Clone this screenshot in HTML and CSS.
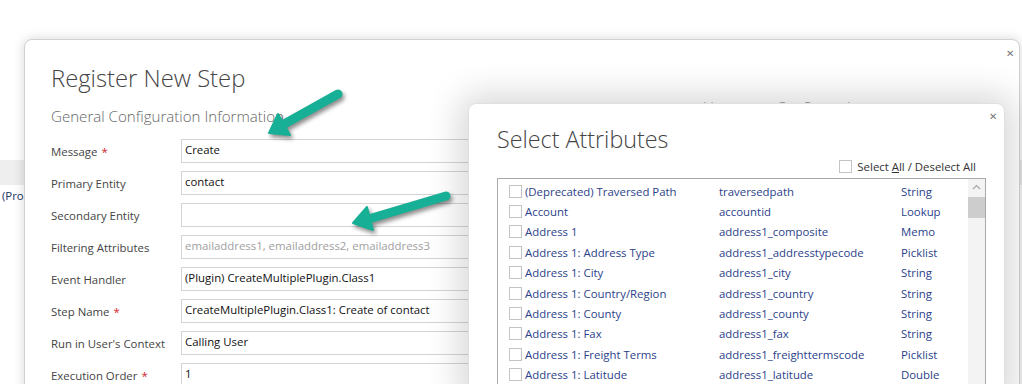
FILE: index.html
```html
<!DOCTYPE html>
<html lang="en">
<head>
	<meta charset="UTF-8">
	<title>Register New Step</title>
	<link rel="stylesheet" href="styles.css">
</head>
<body>
	<!-- page behind the dialogs -->
	<div class="page">
		<div class="band"></div>
		<div class="pagerow">(Pro</div>
	</div>

	<!-- register new step -->
	<div class="dialog main">
		<span class="close">&#x2715;</span>
		<h1>Register New Step</h1>
		<div class="cols">
			<div class="left">
				<h2>General Configuration Information</h2>
				<div class="form">
					<label>Message <span class="req">*</span></label>
					<div class="input">Create</div>
					<label>Primary Entity</label>
					<div class="input">contact</div>
					<label>Secondary Entity</label>
					<div class="input"></div>
					<label>Filtering Attributes</label>
					<div class="input hint">emailaddress1, emailaddress2, emailaddress3</div>
					<label>Event Handler</label>
					<div class="input">(Plugin) CreateMultiplePlugin.Class1</div>
					<label>Step Name <span class="req">*</span></label>
					<div class="input">CreateMultiplePlugin.Class1: Create of contact</div>
					<label>Run in User's Context</label>
					<div class="input">Calling User</div>
					<label>Execution Order <span class="req">*</span></label>
					<div class="input">1</div>
				</div>
			</div>
			<div class="right">
				<h2>Unsecure &nbsp;Configuration</h2>
			</div>
		</div>
	</div>

	<!-- select attributes -->
	<div class="dialog attrs">
		<span class="close">&#x2715;</span>
		<h1>Select Attributes</h1>
		<div class="selectall">
			<span class="box"></span>
			<span>Select <u>A</u>ll / Deselect All</span>
		</div>
		<div class="list">
			<div class="rows">
				<div class="row"><span class="name"><span class="box"></span>(Deprecated) Traversed Path</span><span>traversedpath</span><span>String</span></div>
				<div class="row"><span class="name"><span class="box"></span>Account</span><span>accountid</span><span>Lookup</span></div>
				<div class="row"><span class="name"><span class="box"></span>Address 1</span><span>address1_composite</span><span>Memo</span></div>
				<div class="row"><span class="name"><span class="box"></span>Address 1: Address Type</span><span>address1_addresstypecode</span><span>Picklist</span></div>
				<div class="row"><span class="name"><span class="box"></span>Address 1: City</span><span>address1_city</span><span>String</span></div>
				<div class="row"><span class="name"><span class="box"></span>Address 1: Country/Region</span><span>address1_country</span><span>String</span></div>
				<div class="row"><span class="name"><span class="box"></span>Address 1: County</span><span>address1_county</span><span>String</span></div>
				<div class="row"><span class="name"><span class="box"></span>Address 1: Fax</span><span>address1_fax</span><span>String</span></div>
				<div class="row"><span class="name"><span class="box"></span>Address 1: Freight Terms</span><span>address1_freighttermscode</span><span>Picklist</span></div>
				<div class="row"><span class="name"><span class="box"></span>Address 1: Latitude</span><span>address1_latitude</span><span>Double</span></div>
			</div>
			<div class="scrollbar">
				<svg width="17" height="17" viewBox="0 0 17 17"><path d="M5 10 L8.5 6.5 L12 10" fill="none" stroke="#a6a6a6" stroke-width="1.2"/></svg>
				<div class="thumb"></div>
			</div>
		</div>
	</div>

	<!-- callout arrows -->
	<svg class="arrows" width="1022" height="384" viewBox="0 0 1022 384">
		<g fill="#17b096" stroke="#17b096" stroke-linejoin="round">
			<line x1="338" y1="94" x2="286" y2="123" stroke-width="9" stroke-linecap="round"/>
			<polygon points="269,133 278,114 290,135" stroke-width="2"/>
			<line x1="446" y1="196" x2="372" y2="218" stroke-width="9" stroke-linecap="round"/>
			<polygon points="353,223 367,207 373,230" stroke-width="2"/>
		</g>
	</svg>
</body>
</html>
```

FILE: styles.css
```css
/*common*/
*{
	margin: 0;
	padding: 0;
	box-sizing: border-box;
}
body{
	width: 1022px;
	height: 384px;
	overflow: hidden;
	position: relative;
	background-color: #fff;
	font-family: "Segoe UI", "Open Sans", sans-serif;
	font-size: 11.4px;
	color: #444;
}
h1{
	font-weight: 300;
	color: #444;
}
h2{
	font-weight: 300;
	font-size: 15.1px;
	line-height: 22px;
	color: #666;
}
.box{
	display: inline-block;
	width: 13px;
	height: 13px;
	border: 1px solid #c4c4c4;
	background-color: #fff;
	flex: none;
}

/*page behind*/
.page{
	padding-top: 160px;
}
.page .band{
	height: 25px;
	background-color: #eee;
}
.page .pagerow{
	padding: 3px 0 0 2px;
	color: #233463;
	white-space: nowrap;
}

/*dialogs*/
.dialog{
	position: absolute;
	background-color: #fff;
	border: 1px solid #d2d2d2;
	border-radius: 8px;
}
.dialog .close{
	position: absolute;
	font-size: 10px;
	color: #777;
}
.main{
	left: 24px;
	top: 39px;
	width: 996px;
	height: 380px;
	padding: 22px 0 0 26px;
	box-shadow: 0 0 12px rgba(0,0,0,.16);
}
.main .close{
	right: 5px;
	top: 6px;
}
.main h1{
	font-size: 23.8px;
	line-height: 32px;
}
.main .cols{
	display: flex;
	gap: 32px;
	margin-top: 11px;
}
.main .left{
	width: 620px;
}
.main .right h2{
	margin-top: -9px;
	color: #888;
}
.form{
	display: grid;
	grid-template-columns: 130px 320px;
	grid-auto-rows: 24px;
	row-gap: 8px;
	margin-top: 12px;
}
.form label{
	display: flex;
	align-items: center;
	gap: 4px;
	padding-top: 1px;
	white-space: nowrap;
}
.form .req{
	color: #d2232a;
}
.form .input{
	border: 1px solid #d4d4d4;
	padding: 2px 0 0 3px;
	color: #111;
	white-space: nowrap;
}
.form .hint{
	color: #a0a0a0;
}

/*select attributes*/
.attrs{
	left: 468px;
	top: 103px;
	width: 537px;
	height: 300px;
	padding: 19px 18px 0 28px;
	border-color: #e0e0e0;
	box-shadow: 0 0 34px 8px rgba(0,0,0,.16);
}
.attrs .close{
	right: 7px;
	top: 5px;
}
.attrs h1{
	font-size: 23.3px;
	line-height: 32px;
}
.attrs .selectall{
	display: flex;
	align-items: center;
	justify-content: flex-end;
	gap: 5px;
	margin: 3px 10px 0 0;
	height: 16px;
	color: #333;
}
.list{
	display: flex;
	margin-top: 4px;
	height: 220px;
	border: 1px solid #a8a8a8;
	border-bottom: none;
}
.list .rows{
	flex: 1;
	padding: 2px 0 0 11px;
}
.list .row{
	display: grid;
	grid-template-columns: 210px 182px 1fr;
	height: 20.4px;
	align-items: center;
	color: #2b3f8a;
	white-space: nowrap;
}
.list .name{
	display: flex;
	align-items: center;
	gap: 3px;
}
.list .scrollbar{
	width: 17px;
	background-color: #f3f3f3;
}
.list .scrollbar svg{
	display: block;
}
.list .scrollbar .thumb{
	margin-top: 1px;
	height: 21px;
	background-color: #cdcdcd;
}

/*arrows*/
.arrows{
	position: absolute;
	left: 0;
	top: 0;
	pointer-events: none;
	filter: drop-shadow(2px 3px 2px rgba(0,0,0,.45));
}
```
